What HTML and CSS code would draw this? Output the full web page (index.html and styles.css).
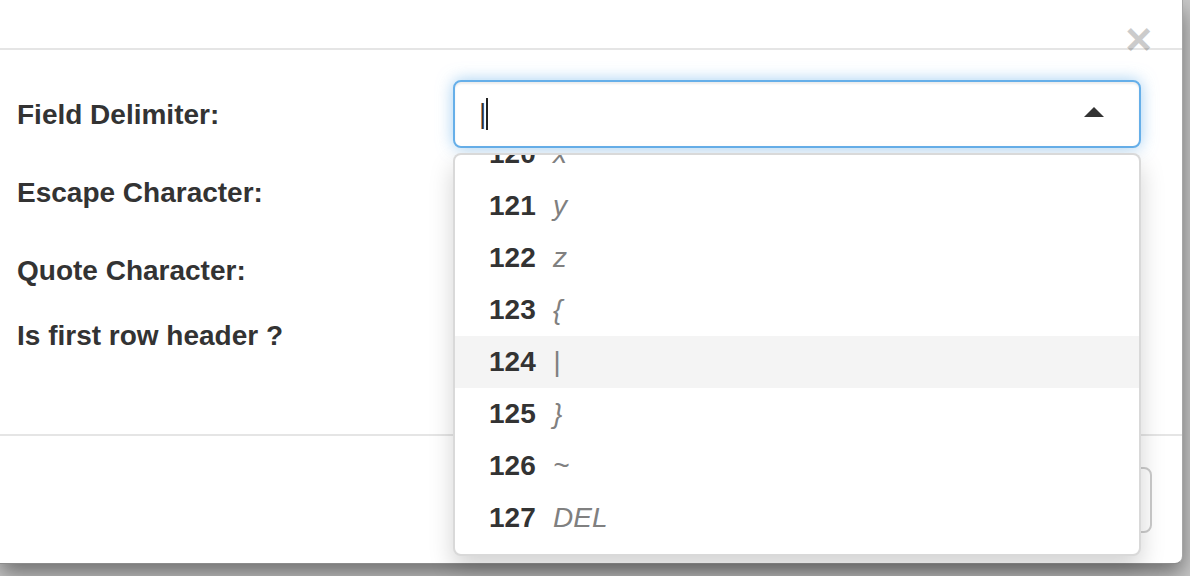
FILE: index.html
```html
<!DOCTYPE html>
<html lang="en">
<head>
<meta charset="utf-8">
<title>CSV options</title>
<link rel="stylesheet" href="styles.css">
</head>
<body>
<div class="modal">
  <div class="modal-header">
    <button class="close" type="button" aria-label="Close">×</button>
  </div>
  <div class="modal-body">
    <div class="form-row row-select">
      <label class="form-label">Field Delimiter:</label>
      <div class="control">
        <div class="select-toggle focused">
          <span class="value">|</span><span class="cursor"></span>
          <span class="arrow-up"></span>
        </div>
        <div class="menu">
          <ul class="options">
            <li class="option"><span class="code">120</span><span class="char">x</span></li>
            <li class="option"><span class="code">121</span><span class="char">y</span></li>
            <li class="option"><span class="code">122</span><span class="char">z</span></li>
            <li class="option"><span class="code">123</span><span class="char">{</span></li>
            <li class="option active"><span class="code">124</span><span class="char">|</span></li>
            <li class="option"><span class="code">125</span><span class="char">}</span></li>
            <li class="option"><span class="code">126</span><span class="char">~</span></li>
            <li class="option"><span class="code">127</span><span class="char">DEL</span></li>
          </ul>
        </div>
      </div>
    </div>
    <div class="form-row row-select">
      <label class="form-label">Escape Character:</label>
      <div class="control"><div class="select-toggle"></div></div>
    </div>
    <div class="form-row row-select">
      <label class="form-label">Quote Character:</label>
      <div class="control"><div class="select-toggle"></div></div>
    </div>
    <div class="form-row row-check">
      <label class="form-label">Is first row header ?</label>
      <div class="control"><span class="checkbox"></span></div>
    </div>
  </div>
  <div class="modal-footer">
    <button class="btn" type="button" aria-label="Cancel"></button>
  </div>
</div>
</body>
</html>
```
FILE: styles.css
```css
html, body {
  margin: 0;
  padding: 0;
}
body {
  width: 1190px;
  height: 576px;
  overflow: hidden;
  background: #c9c9c9;
  font-family: "Liberation Sans", Arial, Helvetica, sans-serif;
  color: #333;
}
.modal {
  width: 1182px;
  background: #fff;
  border-right: 1px solid rgba(0, 0, 0, 0.35);
  border-bottom: 1px solid rgba(0, 0, 0, 0.45);
  border-bottom-right-radius: 8px;
  box-shadow: 0 10px 22px rgba(0, 0, 0, 0.45);
}
.modal-header {
  position: relative;
  height: 48px;
  border-bottom: 2px solid #e5e5e5;
}
.close {
  position: absolute;
  right: 30px;
  top: 16px;
  padding: 0;
  margin: 0;
  border: 0;
  background: transparent;
  font-family: "Liberation Sans", Arial, sans-serif;
  font-size: 46px;
  font-weight: bold;
  line-height: 1;
  color: #000;
  opacity: 0.2;
}
.modal-body {
  padding: 30px 41px 80px 17px;
}
.form-row {
  display: grid;
  grid-template-columns: 436px 688px;
  align-items: center;
  margin-bottom: 10px;
}
.form-row.row-check {
  margin-bottom: 0;
  height: 40px;
}
.form-label {
  font-size: 28px;
  font-weight: bold;
  line-height: 40px;
  padding-top: 2px;
  color: #333;
}
.control {
  position: relative;
}
.select-toggle {
  box-sizing: border-box;
  height: 68px;
  border: 2px solid #ccc;
  border-radius: 8px;
  background: #fff;
  display: flex;
  align-items: center;
  padding: 0 24px;
  font-size: 28px;
  color: #333;
}
.select-toggle.focused {
  border-color: #66afe9;
  box-shadow: inset 0 2px 2px rgba(0, 0, 0, 0.075), 0 0 16px rgba(102, 175, 233, 0.6);
}
.value {
  line-height: 32px;
}
.cursor {
  width: 2px;
  height: 32px;
  background: #222;
  margin-left: 0;
}
.arrow-up {
  margin-left: auto;
  margin-right: 11px;
  width: 0;
  height: 0;
  border-left: 10px solid transparent;
  border-right: 10px solid transparent;
  border-bottom: 10px solid #333;
  margin-top: -4px;
}
.menu {
  position: absolute;
  z-index: 10;
  left: 0;
  right: 0;
  top: 73px;
  box-sizing: border-box;
  background: #fff;
  border: 2px solid rgba(0, 0, 0, 0.15);
  border-radius: 8px;
  box-shadow: 0 12px 24px rgba(0, 0, 0, 0.175);
  overflow: hidden;
  padding-bottom: 10px;
}
.options {
  list-style: none;
  margin: -27px 0 0;
  padding: 0;
}
.option {
  height: 52px;
  line-height: 52px;
  padding-left: 34px;
  font-size: 28px;
  white-space: nowrap;
}
.option.active {
  background: #f4f4f4;
}
.code {
  display: inline-block;
  width: 64px;
  font-weight: bold;
  color: #333;
}
.char {
  font-style: italic;
  color: #808080;
}
.checkbox {
  display: block;
  width: 26px;
  height: 26px;
  border: 2px solid #999;
  border-radius: 4px;
}
.modal-footer {
  border-top: 2px solid #e5e5e5;
  padding: 31px 30px 30px;
  display: flex;
  justify-content: flex-end;
}
.btn {
  width: 170px;
  height: 66px;
  border: 2px solid #ccc;
  border-radius: 8px;
  background: #fff;
}
```
